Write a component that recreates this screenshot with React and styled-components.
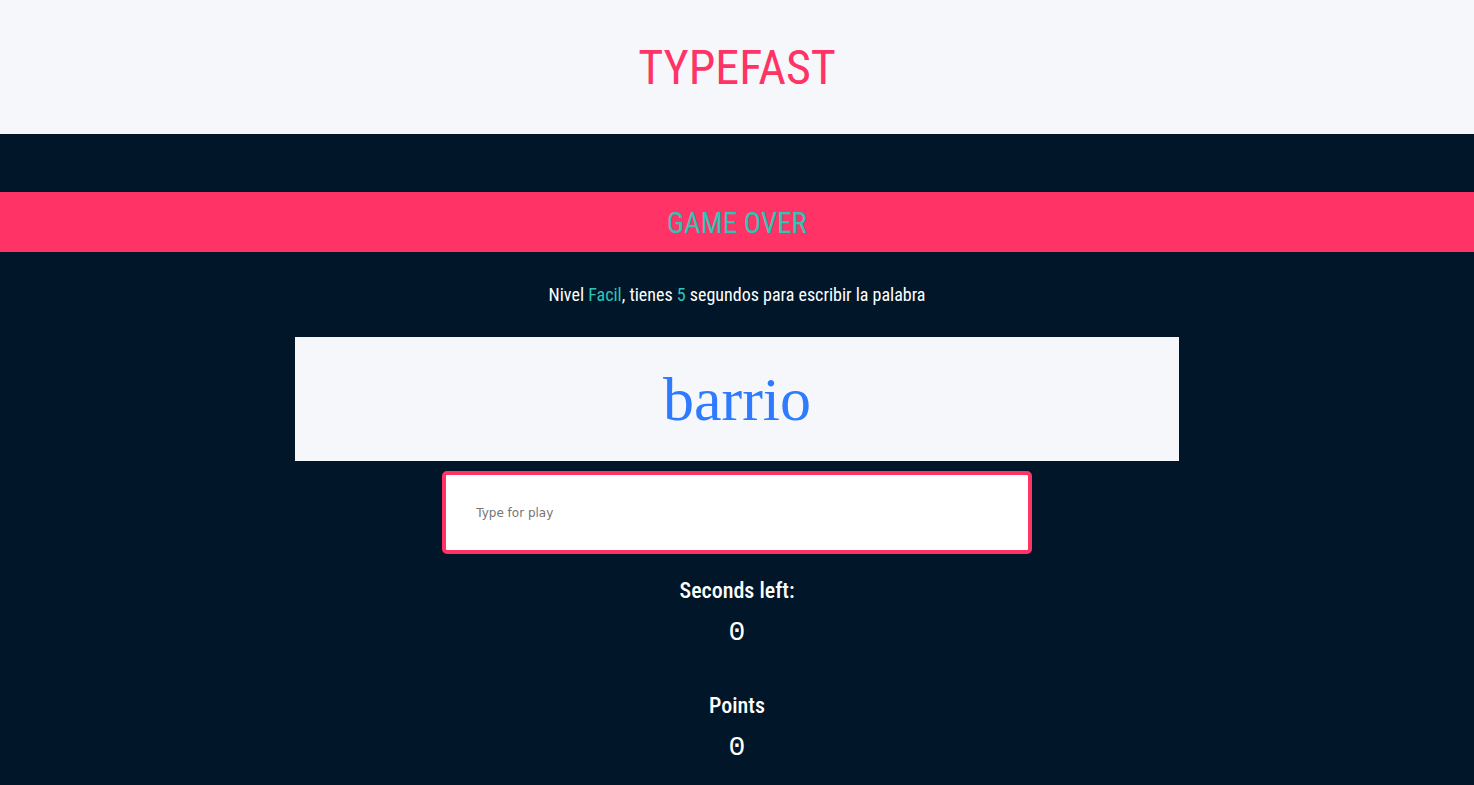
import React, { useState } from 'react';
import styled, { createGlobalStyle } from 'styled-components';

const PINK = '#ff3366';
const DARK = '#011729';
const LIGHT = '#f5f7fa';
const TEAL = '#2ec4b6';

const GlobalStyle = createGlobalStyle`
  html, body {
    margin: 0;
    padding: 0;
    background: ${DARK};
    font-family: "Noto Sans Condensed", "Roboto Condensed", "Open Sans Condensed", "DejaVu Sans Condensed", "Roboto", sans-serif;
    font-stretch: condensed;
  }
`;

const Header = styled.header`
  height: 134px;
  background: ${LIGHT};
  display: flex;
  align-items: center;
  justify-content: center;
`;

const Title = styled.h1`
  margin: 0;
  color: ${PINK};
  font-size: 48px;
  font-weight: 400;
`;

const Main = styled.main`
  padding-top: 58px;
  display: flex;
  flex-direction: column;
  align-items: center;
  color: #fff;
`;

const Banner = styled.div`
  width: 100%;
  height: 60px;
  background: ${PINK};
  color: ${TEAL};
  display: flex;
  align-items: center;
  justify-content: center;
  font-size: 29px;
  padding-top: 2px;
  box-sizing: border-box;
`;

const Info = styled.p`
  margin: 32px 0 0;
  height: 22px;
  font-size: 18px;
  line-height: 22px;
`;

const Hl = styled.span`
  color: ${TEAL};
`;

const WordBox = styled.div`
  margin-top: 31px;
  width: 60%;
  height: 124px;
  background: ${LIGHT};
  display: flex;
  align-items: center;
  justify-content: center;
`;

const Word = styled.h2`
  margin: 0;
  color: #2f7bff;
  font-family: "Liberation Serif", serif;
  font-weight: 400;
  font-size: 62px;
`;

const Input = styled.input`
  box-sizing: border-box;
  margin-top: 10px;
  width: 40%;
  height: 83px;
  border: 4px solid ${PINK};
  border-radius: 5px;
  padding: 0 30px;
  font-family: "DejaVu Sans", sans-serif;
  font-size: 12px;
  outline: none;
  &::placeholder {
    color: #757575;
  }
`;

const Stat = styled.div`
  display: flex;
  flex-direction: column;
  align-items: center;
  margin-top: ${p => p.$top}px;
`;

const StatLabel = styled.h3`
  margin: 0;
  font-size: 22px;
  font-weight: 500;
  line-height: 28px;
`;

const StatValue = styled.span`
  margin-top: 12px;
  font-family: "Liberation Mono", monospace;
  font-size: 28px;
  line-height: 32px;
`;

export default function App() {
  const [text, setText] = useState('');
  return (
    <>
      <GlobalStyle />
      <Header>
        <Title>TYPEFAST</Title>
      </Header>
      <Main>
        <Banner>GAME OVER</Banner>
        <Info>
          Nivel <Hl>Facil</Hl>, tienes <Hl>5</Hl> segundos para escribir la palabra
        </Info>
        <WordBox>
          <Word>barrio</Word>
        </WordBox>
        <Input
          placeholder="Type for play"
          value={text}
          onChange={e => setText(e.target.value)}
        />
        <Stat $top={23}>
          <StatLabel>Seconds left:</StatLabel>
          <StatValue>0</StatValue>
        </Stat>
        <Stat $top={43}>
          <StatLabel>Points</StatLabel>
          <StatValue>0</StatValue>
        </Stat>
      </Main>
    </>
  );
}
